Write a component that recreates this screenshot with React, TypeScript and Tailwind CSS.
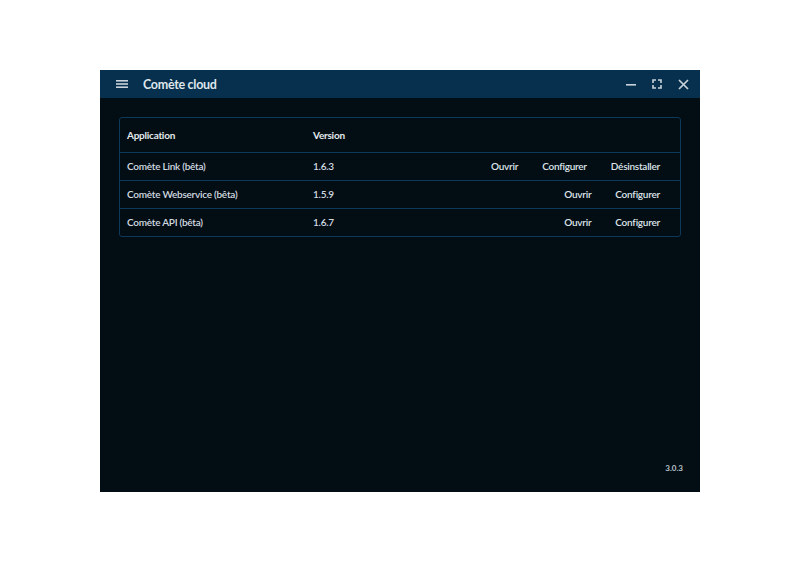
import React from "react";

const rows = [
  { name: "Comète Link (bêta)", version: "1.6.3", actions: ["Ouvrir", "Configurer", "Désinstaller"] },
  { name: "Comète Webservice (bêta)", version: "1.5.9", actions: ["Ouvrir", "Configurer"] },
  { name: "Comète API (bêta)", version: "1.6.7", actions: ["Ouvrir", "Configurer"] },
];

export default function App() {
  return (
    <div
      className="w-[800px] h-[562px] bg-white pt-[70px] pl-[100px]"
      style={{ fontFamily: "Lato, 'Noto Sans', sans-serif" }}
    >
      <div className="w-[600px] h-[422px] flex flex-col bg-[#030d14]">
        <div className="h-[28px] bg-[#07304e] flex items-center text-[#d5dde3]">
          <div className="w-[43px] flex justify-center pl-[1px]">
            <svg width="12" height="10" viewBox="0 0 12 10">
              <rect x="0" y="1" width="12" height="1.6" fill="#c9d2da" />
              <rect x="0" y="4.2" width="12" height="1.6" fill="#c9d2da" />
              <rect x="0" y="7.4" width="12" height="1.6" fill="#c9d2da" />
            </svg>
          </div>
          <div className="text-[12.5px] tracking-[-0.3px] font-bold text-[#dfe6eb] pt-[2px]">Comète cloud</div>
          <div className="ml-auto flex items-center h-full">
            <div className="w-[26px] flex justify-center">
              <svg width="10" height="10" viewBox="0 0 10 10">
                <rect x="0" y="5" width="10" height="1.6" fill="#c9d2da" />
              </svg>
            </div>
            <div className="w-[26px] flex justify-center">
              <svg width="10" height="10" viewBox="0 0 10 10" fill="none" stroke="#c9d2da" strokeWidth="1.6">
                <path d="M1 4V1h3M6 1h3v3M9 6v3H6M4 9H1V6" />
              </svg>
            </div>
            <div className="w-[26px] flex justify-center mr-[4px]">
              <svg width="11" height="11" viewBox="0 0 11 11" stroke="#c9d2da" strokeWidth="1.7">
                <path d="M1 1l9 9M10 1l-9 9" />
              </svg>
            </div>
          </div>
        </div>
        <div className="flex-1 flex flex-col px-[19px] pt-[19px] pb-[18px]">
          <div className="border border-[#0c3a5b] rounded-[3px] text-[10px] tracking-[-0.25px] text-[#d3dbe0]">
            <div className="h-[34px] flex items-center font-bold text-[#e3e9ed] pt-[1px]">
              <div className="w-[186px] pl-[7px]">Application</div>
              <div className="pl-[7px]">Version</div>
            </div>
            {rows.map((r) => (
              <div key={r.name} className="h-[28px] border-t border-[#0c3a5b] flex items-center font-semibold">
                <div className="w-[186px] pl-[7px]">{r.name}</div>
                <div className="pl-[7px]">{r.version}</div>
                <div className="ml-auto flex pr-[8px]">
                  {r.actions.map((a) => (
                    <span key={a} className="px-[12px] text-[#dde3e8]">{a}</span>
                  ))}
                </div>
              </div>
            ))}
          </div>
          <div className="mt-auto self-end text-[8px] font-bold text-[#b9c3ca] mr-[-2px]">3.0.3</div>
        </div>
      </div>
    </div>
  );
}
